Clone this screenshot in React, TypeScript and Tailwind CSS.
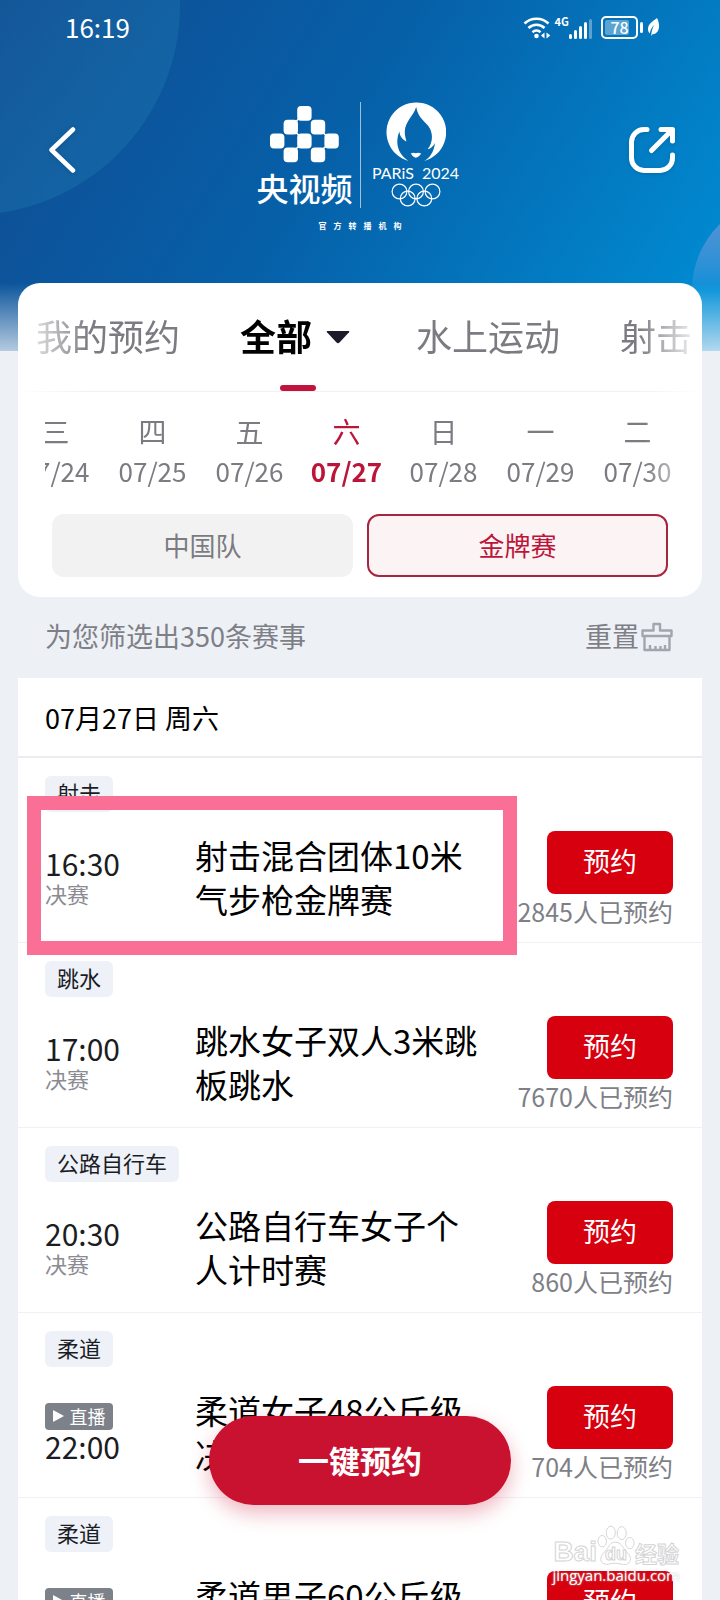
import { useState } from 'react';

type Match = {
  id: number;
  sport: string;
  time: string;
  title: string;
  stage?: string;
  live?: boolean;
  count?: number;
  marked?: boolean;
};

const tabs = ['我的预约', '全部', '水上运动', '射击'];

const days = [
  { week: '三', date: '07/24' },
  { week: '四', date: '07/25' },
  { week: '五', date: '07/26' },
  { week: '六', date: '07/27' },
  { week: '日', date: '07/28' },
  { week: '一', date: '07/29' },
  { week: '二', date: '07/30' },
];

const filters = ['中国队', '金牌赛'];

const matches: Match[] = [
  { id: 1, sport: '射击', time: '16:30', title: '射击混合团体10米气步枪金牌赛', stage: '决赛', count: 2845, marked: true },
  { id: 2, sport: '跳水', time: '17:00', title: '跳水女子双人3米跳板跳水', stage: '决赛', count: 7670 },
  { id: 3, sport: '公路自行车', time: '20:30', title: '公路自行车女子个人计时赛', stage: '决赛', count: 860 },
  { id: 4, sport: '柔道', time: '22:00', title: '柔道女子48公斤级决赛', live: true, count: 704 },
  { id: 5, sport: '柔道', time: '22:00', title: '柔道男子60公斤级决赛', live: true },
];

function StatusBar() {
  return (
    <div className="flex h-[54px] items-center justify-between pl-[65px] pr-[60px] text-white">
      <span className="text-[26px] leading-8">16:19</span>
      <div className="flex items-center">
        <svg width="28" height="24" viewBox="0 0 28 24" fill="none" stroke="currentColor" strokeWidth="2.6">
          <path d="M1.5 8.5a17.5 17.5 0 0 1 24 0" />
          <path d="M5.5 13a11.5 11.5 0 0 1 16 0" />
          <path d="M9.5 17.2a6 6 0 0 1 8 0" />
          <circle cx="13.5" cy="21" r="2.3" fill="currentColor" stroke="none" />
          <path d="M21.5 17.5v6l-3.5-3zM23.5 17.5v6l3.8-3z" fill="currentColor" stroke="none" />
        </svg>
        <span className="ml-1 self-start text-[11px] font-bold leading-3">4G</span>
        <svg width="24" height="20" viewBox="0 0 24 20" fill="currentColor" className="mt-1">
          <rect x="0" y="15" width="3" height="5" rx="1.5" />
          <rect x="5" y="11" width="3" height="9" rx="1.5" />
          <rect x="10" y="7" width="3" height="13" rx="1.5" />
          <rect x="15" y="3" width="3" height="17" rx="1.5" />
          <rect x="20" y="0" width="3" height="20" rx="1.5" opacity="0.35" />
        </svg>
        <span className="relative ml-2 flex h-[23px] w-[37px] items-center justify-center rounded-[5px] border-2 border-white">
          <span className="absolute inset-y-[2px] left-[2px] w-[24px] rounded-[2px] bg-white/35" />
          <span className="relative text-[16px] font-medium leading-4">78</span>
        </span>
        <span className="ml-[2px] h-[11px] w-[3px] rounded-sm bg-white" />
        <svg width="13" height="20" viewBox="0 0 13 20" className="ml-1" fill="currentColor">
          <path d="M10 1C6 4 1 7 1 12c0 2 .7 3.4 1.7 4.4C3.5 12.5 5 10 7.5 7.5 5.5 11 4.4 14 4.2 19l1.3-1.7C10 17 12.500 13 12 8c-.2-2.600-.9-5-2-7z" />
        </svg>
      </div>
    </div>
  );
}

function YangshipinLogo() {
  const blocks = [[2, 0], [1, 1], [3, 1], [0, 2], [2, 2], [4, 2], [1, 3], [3, 3]];
  return (
    <div className="flex w-[96px] flex-col items-center">
      <svg width="69" height="57" viewBox="0 0 69 57" className="mt-1" fill="white">
        {blocks.map(([c, r]) => (
          <rect key={`${c}-${r}`} x={c * 13.6} y={r * 13.8} width="14.4" height="14.8" rx="4" />
        ))}
        {/* necks that join the blocks diagonally */}
        <g stroke="white" strokeWidth="1.6" strokeLinecap="round">
          <path d="M26 15.500l3-3M26 26.500l3 3M53 26.500l3 3M26 43l3-3M53 43l3-3" />
        </g>
      </svg>
      <span className="mt-[3px] whitespace-nowrap text-[32px] font-medium leading-[42px] text-white">央视频</span>
    </div>
  );
}

function ParisLogo() {
  return (
    <div className="flex w-[96px] flex-col items-center text-white">
      <svg width="60" height="60" viewBox="83 303 179 179" fill="currentColor">
        <path d="M150 479A89 89 0 1 1 197 479C213 470 226 452 229 425C222 437 215 443 207 444C220 428 225 405 214 382C203 362 180 355 173 318C165 345 140 360 139 392C139 405 142 412 144 421C132 415 124 405 123 391C117 405 114 425 120 442C126 460 137 470 150 479Z" />
        <path d="M157 457q8-4 15-1 8-3 16 1-8 12-16 12t-15-12z" />
      </svg>
      <div className="mt-[3px] flex gap-2 whitespace-nowrap font-['Lato',sans-serif] text-[16px] leading-4">
        <span>PARiS</span>
        <span>2024</span>
      </div>
      <svg width="50" height="24" viewBox="0 0 50 24" className="mt-[2px]" fill="none" stroke="currentColor" strokeWidth="1.2">
        <circle cx="8.5" cy="8.5" r="7.400" />
        <circle cx="25" cy="8.5" r="7.400" />
        <circle cx="41.5" cy="8.5" r="7.400" />
        <circle cx="16.7" cy="15.5" r="7.400" />
        <circle cx="33.3" cy="15.5" r="7.400" />
      </svg>
    </div>
  );
}

function Header() {
  return (
    <header className="relative h-[351px] overflow-hidden bg-linear-[122deg] from-[#114b92] via-[#0660a8] via-45% to-[#008fd6]">
      <svg className="absolute inset-0" width="200" height="230">
        <defs>
          <linearGradient id="glow" x1="0.3" y1="0.2" x2="0.9" y2="0.7">
            <stop offset="0" stopColor="#1c74ac" stopOpacity="0.1" />
            <stop offset="1" stopColor="#1c74ac" stopOpacity="0.45" />
          </linearGradient>
        </defs>
        <circle cx="-30" cy="5" r="210" fill="url(#glow)" />
      </svg>
      <span className="absolute -right-[156px] top-[198px] size-[184px] rounded-full bg-linear-to-b from-[#5b93d3] to-[#0090d8] to-50%" />
      <span className="absolute inset-x-0 bottom-0 h-[68px] bg-linear-to-b from-[#edf1f6]/0 to-[#edf1f6]/75" />

      <div className="relative">
        <StatusBar />
        <div className="mt-[43px] flex items-start justify-between px-[45px]">
          <button type="button" aria-label="返回" className="flex h-[106px] w-[46px] items-center">
            <svg width="34" height="50" viewBox="0 0 34 50" fill="none" stroke="white" strokeWidth="4.500" strokeLinecap="round" strokeLinejoin="round" className="drop-shadow">
              <path d="M28 4.500 6.500 25 28 45.500" />
            </svg>
          </button>
          <div className="flex flex-col items-center pt-[5px]">
            <div className="flex gap-[7px]">
              <YangshipinLogo />
              <span className="w-px bg-white/60" />
              <ParisLogo />
            </div>
            <div className="mt-[10px] flex gap-[7px] text-[8px] font-bold leading-4 text-white">
              {[...'官方转播机构'].map((c) => (
                <span key={c}>{c}</span>
              ))}
            </div>
          </div>
          <button type="button" aria-label="分享" className="flex h-[106px] w-[46px] items-center">
            <svg width="46" height="46" viewBox="0 0 46 46" fill="none" stroke="white" strokeWidth="5" strokeLinecap="round" strokeLinejoin="round" className="drop-shadow">
              <path d="M18 2.500h-3A12.500 12.500 0 0 0 2.500 15v16A12.500 12.500 0 0 0 15 43.500h16A12.500 12.500 0 0 0 43.500 31v-3" />
              <path d="M32 2.500h11.500V14M42 4 22.500 23.500" />
            </svg>
          </button>
        </div>
      </div>
    </header>
  );
}

function BroomIcon() {
  return (
    <svg width="32" height="30" viewBox="0 0 32 30" fill="none" stroke="#a3a5ad" strokeWidth="2.4" strokeLinejoin="round">
      <path d="M1.5 8.5h11V2h6.5v6.5h11.5V14h-29zM3.5 14v14h25V14M9 28v-5M14.5 28v-4M19.5 28v-4M24 28v-5" />
    </svg>
  );
}

function MatchRow({ match }: { match: Match }) {
  return (
    <li className="relative flex h-[185px] flex-col border-b border-[#f1f1f3] pl-[27px] pr-[29px] pt-[18px]">
      <span className="h-9 self-start rounded-md bg-[#eef1f7] px-3 text-[22px] leading-8 text-[#1b1d26]">{match.sport}</span>
      <div className="flex flex-1 items-center">
        <div className="flex w-[150px] shrink-0 flex-col items-start">
          {match.live && (
            <span className="flex h-[27px] w-[68px] items-center justify-center gap-[6px] rounded bg-[#7d8189] text-[18px] leading-6 text-white">
              <svg width="11" height="12" viewBox="0 0 11 12" fill="currentColor">
                <path d="M0 0l11 6-11 6z" />
              </svg>
              直播
            </span>
          )}
          <time className="text-[30px] leading-8 text-[#1b1d22]">{match.time}</time>
          {match.stage && <span className="text-[22px] leading-7 text-[#8b8c93]">{match.stage}</span>}
        </div>
        <h3 className="w-[290px] text-[33px] leading-[44px] text-black">{match.title}</h3>
        <div className="ml-auto flex shrink-0 flex-col items-end pt-1">
          <button type="button" className="h-[63px] w-[126px] rounded-lg bg-[#d7000f] pb-[2px] text-[27px] text-white">
            预约
          </button>
          <span className="-ml-10 h-[34px] whitespace-nowrap text-[25px] leading-[34px] text-[#7e7f87]">
            {match.count && `${match.count}人已预约`}
          </span>
        </div>
      </div>
      {match.marked && (
        <span className="pointer-events-none absolute left-[9px] top-[38px] z-10 h-[159px] w-[490px] border-[14px] border-[#f96f95]" />
      )}
    </li>
  );
}

function Watermark() {
  return (
    <div className="pointer-events-none absolute bottom-[16px] right-[40px] z-20 flex flex-col items-center text-white">
      <div className="flex h-[44px] items-end font-bold [-webkit-text-stroke:1px_#d4d4d6]">
        <span className="font-['Liberation_Sans',sans-serif] text-[28px] leading-7">Bai</span>
        <span className="relative flex w-[38px] justify-center">
          <svg width="38" height="42" viewBox="0 0 40 44" fill="white" stroke="#d4d4d6" strokeWidth="1">
            <ellipse cx="5.5" cy="18" rx="4.5" ry="6" />
            <ellipse cx="14.5" cy="9" rx="4.8" ry="6.8" />
            <ellipse cx="26" cy="9.5" rx="4.8" ry="6.8" />
            <ellipse cx="34.5" cy="20" rx="4.5" ry="6" />
            <path d="M19 19c6 0 8 5 11 9s6 5 5 10-6 5-10 4-9-1-12 0-9 0-9-5 3-6 6-10 4-8 9-8z" />
          </svg>
          <span className="absolute bottom-[2px] font-['Liberation_Sans',sans-serif] text-[18px] leading-5">du</span>
        </span>
        <span className="text-[22px] leading-7">经验</span>
      </div>
      <span className="font-['Open_Sans',sans-serif] text-[15px] font-medium leading-[18px] [text-shadow:0_0_2px_#bbb]">jingyan.baidu.com</span>
    </div>
  );
}

export default function App() {
  const [tab, setTab] = useState('全部');
  const [day, setDay] = useState('07/27');
  const [filter, setFilter] = useState('金牌赛');

  return (
    <div className="relative h-screen overflow-hidden bg-[#edf1f6] font-['Noto_Sans_CJK_SC',sans-serif]">
      <Header />

      <main className="relative -mt-[68px] px-[18px]">
        <section className="rounded-[22px] bg-white pb-5">
          <nav className="flex h-[109px] gap-[60px] overflow-hidden border-b border-[#f1f1f3] px-[18px] [mask-image:linear-gradient(to_right,transparent_0px,black_70px,black_620px,transparent_684px)]">
            {tabs.map((t) => (
              <button
                key={t}
                type="button"
                onClick={() => setTab(t)}
                className={`relative flex shrink-0 items-center whitespace-nowrap pb-1 text-[36px] ${t === tab ? 'pr-[6px] font-bold text-black' : 'text-[#7b7b82]'}`}
              >
                {t}
                {t === tab && (
                  <>
                    <svg width="24" height="14" viewBox="0 0 24 14" className="ml-[14px] mt-1" fill="#1c1b29">
                      <path d="M1.5 1h21q1.5 0 .5 1.200l-9.500 10.300q-1.500 1.500-3 0L1 2.200Q0 1 1.500 1z" />
                    </svg>
                    <span className="absolute bottom-0 left-[40px] h-[6px] w-[36px] rounded-full bg-[#c0143c]" />
                  </>
                )}
              </button>
            ))}
          </nav>

          <div className="mx-[27px] flex overflow-hidden pt-[21px] [mask-image:linear-gradient(to_right,black_600px,transparent_660px)]">
            <div className="-ml-[38px] flex">
              {days.map((d) => (
                <button
                  key={d.date}
                  type="button"
                  onClick={() => setDay(d.date)}
                  className={`flex w-[97px] shrink-0 flex-col items-center ${d.date === day ? 'font-bold text-[#bb1639]' : 'text-[#7b7b82]'}`}
                >
                  <span className="text-[28px] font-normal leading-9">{d.week}</span>
                  <span className="text-[26px] leading-[44px]">{d.date}</span>
                </button>
              ))}
            </div>
          </div>

          <div className="mt-[21px] grid grid-cols-2 gap-[14px] px-[34px]">
            {filters.map((f) => (
              <button
                key={f}
                type="button"
                onClick={() => setFilter(f)}
                className={`h-[63px] rounded-xl pb-[2px] text-[26px] ${f === filter ? 'border-2 border-[#a82540] bg-[#fbf3f4] text-[#bb1639]' : 'bg-[#f2f2f3] text-[#7b7b82]'}`}
              >
                {f}
              </button>
            ))}
          </div>
        </section>

        <div className="flex h-[81px] items-center justify-between pb-[2px] pl-[27px] pr-[29px] text-[27px] text-[#7e7f87]">
          <p>为您筛选出350条赛事</p>
          <button type="button" className="flex items-center gap-[2px]">
            重置
            <BroomIcon />
          </button>
        </div>

        <section className="bg-white">
          <h2 className="h-[80px] border-b-2 border-[#ececee] pl-[27px] text-[27px] leading-[80px] text-black">07月27日 周六</h2>
          <ul>
            {matches.map((m) => (
              <MatchRow key={m.id} match={m} />
            ))}
          </ul>
        </section>
      </main>

      <button
        type="button"
        className="absolute bottom-[95px] left-1/2 h-[89px] w-[302px] -translate-x-1/2 rounded-full bg-[#c8122f] text-[31px] font-bold text-white shadow-[0_8px_20px_rgba(200,18,47,0.3)]"
      >
        一键预约
      </button>

      <Watermark />
    </div>
  );
}
